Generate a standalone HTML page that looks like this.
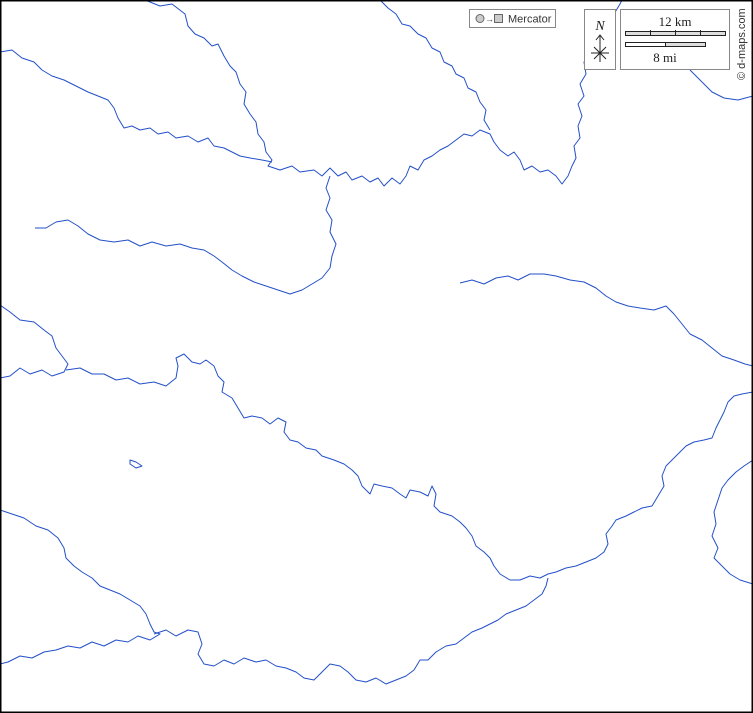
<!DOCTYPE html>
<html><head><meta charset="utf-8"><style>
html,body{margin:0;padding:0;background:#fff}
svg{display:block}
</style></head><body>
<svg width="753" height="713" viewBox="0 0 753 713" xmlns="http://www.w3.org/2000/svg">
<rect x="0" y="0" width="753" height="713" fill="#fff"/>
<g fill="none" stroke="#2350c8" stroke-width="1" stroke-linejoin="round">
<path d="M145,0 L160,6 L172,4 L185,14 L188,26 L195,34 L204,38 L212,46 L218,44 L224,56 L230,66 L236,72 L240,84 L246,92 L244,104 L250,114 L256,122 L258,134 L264,142 L266,152 L272,160 L268,166 L280,170 L292,166 L300,172 L314,170 L322,176 L330,168 L338,176 L346,172 L352,180 L362,176 L370,182 L378,178 L384,186 L392,178 L400,184 L406,176 L410,166 L418,170 L424,160 L432,156 L440,150 L448,146 L456,140 L464,134 L472,136 L480,130 L490,134 L494,142 L500,150 L508,156 L514,152 L520,160 L524,170 L532,166 L540,172 L548,170 L556,176 L562,184 L568,176 L572,166 L576,158 L574,146 L580,138 L578,126 L582,116 L578,104 L584,96 L580,84 L586,74 L584,62 L590,54 L596,46 L602,34 L608,24 L614,14 L620,4 L622,0"/>
<path d="M380,0 L388,8 L396,14 L402,24 L410,26 L418,34 L426,38 L432,48 L440,52 L444,62 L452,66 L456,74 L464,78 L468,88 L476,92 L480,102 L486,110 L484,120 L490,130"/>
<path d="M690,70 L700,80 L712,92 L724,98 L738,100 L753,96"/>
<path d="M0,52 L12,50 L22,58 L34,62 L42,70 L52,76 L64,80 L76,86 L88,92 L98,96 L108,100 L114,108 L118,118 L124,128 L132,126 L140,130 L150,128 L158,134 L168,132 L176,138 L188,136 L198,142 L208,138 L214,146 L224,148 L232,152 L240,156 L250,158 L262,160 L272,162"/>
<path d="M330,176 L326,188 L330,198 L326,210 L332,220 L330,232 L336,244 L332,256 L330,268 L322,278 L312,284 L302,290 L290,294 L278,290 L266,286 L254,282 L242,276 L232,270 L222,262 L214,256 L204,250 L192,248 L180,244 L166,246 L152,242 L140,246 L128,240 L114,242 L100,240 L88,234 L78,226 L68,220 L56,222 L46,228 L35,228"/>
<path d="M460,283 L472,280 L484,284 L496,278 L508,276 L518,280 L530,274 L544,274 L556,276 L570,280 L584,282 L596,288 L606,296 L616,302 L628,306 L640,308 L654,310 L666,306 L674,314 L682,324 L690,334 L702,340 L712,348 L722,356 L734,360 L745,364 L753,366"/>
<path d="M0,305 L10,312 L20,320 L34,322 L44,330 L52,336 L56,348 L62,356 L68,364 L64,372 L52,376 L42,370 L30,374 L20,368 L10,376 L0,378"/>
<path d="M66,370 L80,368 L92,374 L104,374 L116,380 L128,378 L140,384 L154,382 L166,386 L176,378 L178,366 L176,358 L184,354 L192,362 L200,364 L206,360 L214,366 L218,376 L224,382 L222,392 L232,398 L238,408 L244,418 L252,416 L262,418 L270,424 L278,418 L286,422 L284,432 L290,440 L298,442 L306,448 L316,450 L322,456 L334,460 L344,464 L352,470 L358,476 L362,486 L370,494 L374,484 L382,486 L392,488 L400,494 L406,498 L410,490 L420,492 L428,496 L432,486 L436,494 L434,506 L440,512 L452,516 L460,522 L466,528 L472,536 L476,546 L484,552 L490,558 L494,566 L500,574 L510,580 L520,580 L530,576 L540,578 L548,574 L556,572 L566,568 L576,566 L586,562 L596,558 L604,552 L608,544 L606,534 L612,526 L616,520 L626,516 L634,512 L642,508 L652,506 L658,496 L664,486 L662,476 L666,466 L672,460 L680,452 L686,446 L694,442 L704,440 L712,438 L716,428 L720,420 L724,412 L728,402 L734,396 L742,394 L753,392"/>
<path d="M0,510 L12,514 L24,518 L36,526 L48,530 L58,538 L64,548 L66,558 L74,566 L82,572 L92,578 L100,586 L110,590 L120,594 L130,600 L140,606 L146,614 L150,624 L154,632 L160,634 L150,640 L138,636 L128,642 L116,640 L104,646 L92,642 L80,648 L68,646 L56,650 L44,652 L32,658 L20,656 L8,662 L0,664"/>
<path d="M154,634 L166,630 L176,636 L188,630 L198,632 L202,644 L198,654 L204,664 L214,666 L224,660 L234,664 L244,658 L256,662 L266,660 L276,666 L286,668 L296,672 L304,678 L314,680 L322,672 L330,664 L340,666 L348,672 L356,680 L366,682 L376,678 L386,684 L396,680 L406,676 L414,670 L420,660 L428,660 L436,652 L446,646 L456,644 L464,638 L472,632 L482,628 L490,624 L498,620 L506,614 L516,610 L526,606 L534,600 L542,594 L546,586 L548,578"/>
<path d="M753,460 L744,466 L736,472 L728,480 L722,488 L718,500 L714,512 L716,524 L712,536 L718,548 L714,558 L722,566 L730,574 L740,580 L753,584"/>
<path d="M130,460 L136,462 L142,466 L136,468 L130,464 Z"/>
</g>
<!-- legend -->
<rect x="469.5" y="9.5" width="86" height="18" fill="#fff" stroke="#888"/>
<circle cx="480" cy="18.5" r="4" fill="#ccc" stroke="#666"/>
<text x="485" y="22" font-family="Liberation Sans, sans-serif" font-size="9" fill="#444">→</text>
<rect x="494.5" y="14.5" width="8" height="8" fill="#ccc" stroke="#666"/>
<text x="508" y="22.5" font-family="Liberation Sans, sans-serif" font-size="11" fill="#333">Mercator</text>
<rect x="584.5" y="9.5" width="31" height="60" fill="#fff" stroke="#888"/>
<text x="600" y="30" text-anchor="middle" font-family="Liberation Serif, serif" font-style="italic" font-size="14" fill="#222">N</text>
<g stroke="#222" stroke-width="1" fill="none">
<path d="M600,36 L600,62 M596,40 L600,35 L604,40 M591,53 L609,53 M594,47 L606,59 M606,47 L594,59"/>
</g>
<rect x="620.5" y="9.5" width="109" height="60" fill="#fff" stroke="#888"/>
<text x="675" y="26" text-anchor="middle" font-family="Liberation Serif, serif" font-size="13" fill="#222">12 km</text>
<rect x="625.5" y="31.5" width="100" height="4" fill="#ddd" stroke="#222"/>
<path d="M650.5,30 L650.5,36 M675.5,30 L675.5,36 M700.5,30 L700.5,36" stroke="#222"/>
<rect x="625.5" y="42.5" width="80" height="4" fill="#ddd" stroke="#222"/>
<rect x="625.5" y="42.5" width="40" height="4" fill="#fff" stroke="#222"/>
<text x="665" y="62" text-anchor="middle" font-family="Liberation Serif, serif" font-size="13" fill="#222">8 mi</text>
<text transform="translate(745,80) rotate(-90)" font-family="Liberation Sans, sans-serif" font-size="11" fill="#333">© d-maps.com</text>
<rect x="0.75" y="0.75" width="751.5" height="711.5" fill="none" stroke="#000" stroke-width="1.5"/>
</svg>
</body></html>
